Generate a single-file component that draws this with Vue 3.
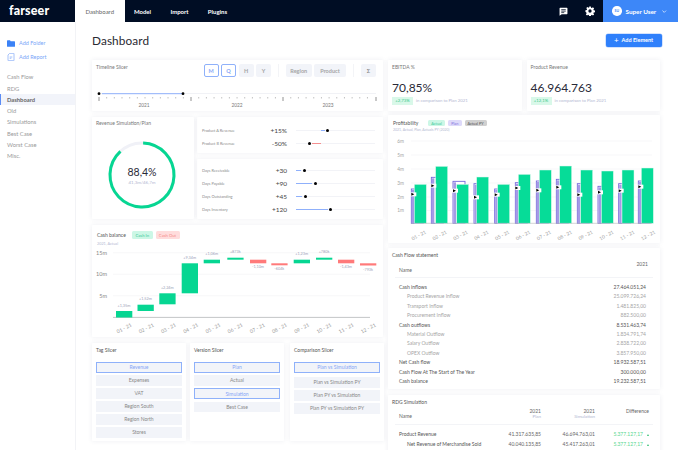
<script setup>
const nav = ['Cash Flow', 'RDG', 'Dashboard', 'Old', 'Simulations', 'Best Case', 'Worst Case', 'Misc.']
const months = ['01','02','03','04','05','06','07','08','09','10','11','12'].map(m => m + ' - 21')

const minorTicks = []
for (let i = 0; i < 36; i++) {
  if (i % 12) minorTicks.push(7 + i * 7.67)
}
const majorTicks = [7, 99, 191, 284]

const sliderTop = [
  { label: 'Product A Revenue', value: '+15%', thumb: 31, from: 25, to: 29, tone: 'blue' },
  { label: 'Product B Revenue', value: '-50%', thumb: 13.5, from: 16, to: 25, tone: 'red' }
]
const sliderDays = [
  { label: 'Days Receivable', value: '+30', thumb: 8, from: 0, to: 5, tone: 'blue' },
  { label: 'Days Payable', value: '+90', thumb: 19, from: 0, to: 16, tone: 'blue' },
  { label: 'Days Outstanding', value: '+45', thumb: 9.3, from: 0, to: 6, tone: 'blue' },
  { label: 'Days Inventory', value: '+120', thumb: 34.7, from: 0, to: 32, tone: 'blue' }
]

const cashBars = [
  [24, 86, 6.5, '+1,35m', 1], [45.5, 79.7, 6.3, '+1,52m', 1], [67.3, 68.3, 11, '+2,24m', 1],
  [89.7, 38.3, 30, '+9,34m', 1], [111.7, 34.7, 3.6, '+1,06m', 1], [135.3, 32.7, 2, '+873k', 1],
  [158, 34.7, 3.6, '-1,10m', 0], [179.3, 38.3, 2, '-604k', 0], [201.7, 34.7, 3.6, '+1,23m', 1],
  [224, 32.7, 2, '+780k', 1], [246, 34.7, 3.6, '-1,43m', 0], [268, 38.3, 2.2, '-793k', 0]
].map(([x, y, h, label, up]) => ({ x, y: y - 21, h, label, up: !!up }))

const cashGrid = [[6.7, '15m'], [28.3, '10m'], [49.7, '5m']]

const profitGrid = [[5, '6m'], [19, '5m'], [33, '4m'], [47, '3m'], [61, '2m'], [74.5, '1m']]
const greenX = [79, 143, 206, 266, 329, 391, 454, 515, 578, 640, 702, 760]
const greenTop = [208, 154, 208, 186, 208, 178, 165, 153, 165, 168, 165, 159]
const planX = [70, 130, 195, 258, 320, 382, 445, 505, 568, 630, 692, 751]
const planTop = [222, 187, 199, 206, 222, 203, 198, 193, 206, 214, 206, 198]
const markY = [238, 212, 227, 247, 239, 219, 226, 217, 239, 232, 227, 215]
const profitBars = greenX.map((g, i) => ({
  gx: g / 3,
  gy: greenTop[i] / 3 - 21,
  gh: (325 - greenTop[i]) / 3,
  px: planX[i] / 3,
  py: planTop[i] / 3 - 21,
  ph: (325 - planTop[i]) / 3,
  my: markY[i] / 3 - 21,
  month: months[i]
}))

const slicers = [
  { title: 'Tag Slicer', items: [['Revenue', 1], ['Expenses'], ['VAT'], ['Region South'], ['Region North'], ['Stores']] },
  { title: 'Version Slicer', items: [['Plan', 1], ['Actual'], ['Simulation', 1], ['Best Case']] },
  { title: 'Comparison Slicer', wide: true, items: [['Plan vs Simulation', 1], ['Plan vs Simulation PY'], ['Plan PY vs Simulation'], ['Plan PY vs Simulation PY']] }
]

const cashRows = [
  ['Cash inflows', '27.464.051,24', 0], ['Product Revenue Inflow', '25.099.726,24', 1], ['Transport Inflow', '1.481.825,00', 1],
  ['Procurement Inflow', '882.500,00', 1], ['Cash outflows', '8.531.463,74', 0], ['Material Outflow', '1.834.791,74', 1],
  ['Salary Outflow', '2.838.722,00', 1], ['OPEX Outflow', '3.857.950,00', 1], ['Net Cash flow', '18.932.587,51', 0],
  ['Cash Flow At The Start of The Year', '300.000,00', 0], ['Cash balance', '19.232.587,51', 0]
]
const rdgRows = [
  ['Product Revenue', '41.317.635,85', '46.694.763,01', '5.377.127,17', 0],
  ['Net Revenue of Merchandise Sold', '40.040.135,85', '45.417.263,01', '5.377.127,17', 1]
]
</script>

<template>
  <div class="app">
    <header class="top">
      <div class="logo">farseer</div>
      <nav class="tabs">
        <span class="tab on">Dashboard</span>
        <span class="tab">Model</span>
        <span class="tab">Import</span>
        <span class="tab">Plugins</span>
      </nav>
      <div class="top-right">
        <svg class="ic" viewBox="0 0 24 24" width="9" height="9"><path fill="#fff" d="M3 2h18a1.500 1.500 0 0 1 1.500 1.500v14a1.500 1.500 0 0 1-1.500 1.500H7l-5.500 4V3.500A1.500 1.500 0 0 1 3 2z"/><path stroke="#000d24" stroke-width="2" d="M6 7h12M6 11h12M6 15h8"/></svg>
        <svg class="ic gear" viewBox="0 0 24 24" width="10" height="10"><path fill="#fff" fill-rule="evenodd" d="M10 1h4l.6 3.100 1.900.8 2.600-1.800 2.800 2.800-1.800 2.600.8 1.900 3.100.6v4l-3.100.6-.8 1.900 1.800 2.600-2.800 2.800-2.600-1.800-1.900.8-.6 3.100h-4l-.6-3.100-1.900-.8-2.600 1.800-2.800-2.800 1.800-2.600-.8-1.900L1 14v-4l3.100-.6.800-1.900-1.800-2.600 2.800-2.800 2.600 1.800 1.900-.8zM12 8a4 4 0 1 0 0 8 4 4 0 0 0 0-8z"/></svg>
        <div class="user">
          <span class="avatar">SU</span>
          <span>Super User</span>
          <svg viewBox="0 0 10 6" width="4.500" height="3"><path d="M1 1l4 4 4-4" fill="none" stroke="#fff" stroke-width="1.500"/></svg>
        </div>
      </div>
    </header>

    <div class="body">
      <aside class="side">
        <div class="act">
          <svg viewBox="0 0 24 20" width="8" height="7"><path fill="#3b82f6" d="M0 2a2 2 0 0 1 2-2h7l2 3h11a2 2 0 0 1 2 2v13a2 2 0 0 1-2 2H2a2 2 0 0 1-2-2z"/></svg>
          <span>Add Folder</span>
        </div>
        <div class="act">
          <svg viewBox="0 0 20 24" width="7" height="8"><path fill="none" stroke="#7aa5f8" stroke-width="2" d="M6 1h12a1 1 0 0 1 1 1v20a1 1 0 0 1-1 1H2a1 1 0 0 1-1-1V6z"/><path stroke="#7aa5f8" stroke-width="2" d="M6 12h8M6 16h5"/></svg>
          <span>Add Report</span>
        </div>
        <ul class="menu">
          <li v-for="n in nav" :key="n" :class="{ cur: n === 'Dashboard' }">{{ n }}</li>
        </ul>
      </aside>

      <main class="main">
        <div class="head">
          <h1>Dashboard</h1>
          <button class="add"><span class="plus">+</span>Add Element</button>
        </div>

        <div class="cols">
          <div class="col left">
            <section class="card timeline">
              <div class="tl-head">
                <span class="t">Timeline Slicer</span>
                <div class="tl-btns">
                  <span class="tb act-b w15">M</span>
                  <span class="tb act-b w15">Q</span>
                  <span class="tb w15">H</span>
                  <span class="tb w15">Y</span>
                  <i class="sep"></i>
                  <span class="tb w25">Region</span>
                  <span class="tb w32">Product</span>
                  <i class="sep"></i>
                  <span class="tb w15 sig">Σ</span>
                </div>
              </div>
              <svg class="tl-svg" width="291" height="31" viewBox="0 0 291 31">
                <line x1="7" x2="284" y1="13.500" y2="13.500" stroke="#f1f2f6" stroke-width="1"/>
                <line x1="10" x2="90" y1="13.700" y2="13.700" stroke="#8fb0fb" stroke-width="1"/>
                <circle cx="7" cy="13.700" r="1.400" fill="#000"/>
                <circle cx="91" cy="13.700" r="1.400" fill="#000"/>
                <line v-for="x in majorTicks" :key="x" :x1="x" :x2="x" y1="17" y2="21" stroke="#777" stroke-width=".8"/>
                <line v-for="x in minorTicks" :key="'m' + x" :x1="x" :x2="x" y1="17" y2="18.500" stroke="#999" stroke-width=".6"/>
                <text class="yr" x="52" y="27" text-anchor="middle">2021</text>
                <text class="yr" x="145" y="27" text-anchor="middle">2022</text>
                <text class="yr" x="236" y="27" text-anchor="middle">2023</text>
              </svg>
            </section>

            <div class="sim-row">
              <section class="card rev">
                <span class="t">Revenue Simulation/Plan</span>
                <div class="donut">
                  <svg width="74" height="74" viewBox="0 0 74 74">
                    <circle cx="37" cy="37" r="32" fill="none" stroke="#f0f1f7" stroke-width="3"/>
                    <circle cx="37" cy="37" r="32" fill="none" stroke="#06d692" stroke-width="3" stroke-dasharray="176 201" transform="rotate(-88 37 37)"/>
                  </svg>
                  <div class="d-txt">
                    <b>88,4%</b>
                    <small>41,3m/46,7m</small>
                  </div>
                </div>
              </section>
              <div class="slid-col">
                <section class="card sl sl-a">
                  <div v-for="r in sliderTop" :key="r.label" class="sl-row">
                    <span class="sl-l">{{ r.label }}</span>
                    <span class="sl-v">{{ r.value }}</span>
                    <span class="track">
                      <i class="seg" :class="r.tone" :style="{ left: r.from + 'px', width: (r.to - r.from) + 'px' }"></i>
                      <i class="thumb" :style="{ left: r.thumb + 'px' }"></i>
                    </span>
                  </div>
                </section>
                <section class="card sl sl-b">
                  <div v-for="r in sliderDays" :key="r.label" class="sl-row">
                    <span class="sl-l">{{ r.label }}</span>
                    <span class="sl-v">{{ r.value }}</span>
                    <span class="track">
                      <i class="seg" :class="r.tone" :style="{ left: r.from + 'px', width: (r.to - r.from) + 'px' }"></i>
                      <i class="thumb" :style="{ left: r.thumb + 'px' }"></i>
                    </span>
                  </div>
                </section>
              </div>
            </div>

            <section class="card cash">
              <div class="ch-head">
                <span class="t dk">Cash balance</span>
                <span class="chip c-in">Cash In</span>
                <span class="chip c-out">Cash Out</span>
              </div>
              <div class="sub">2021, Actual</div>
              <svg class="ch-svg" width="291" height="91" viewBox="0 0 291 91">
                <g v-for="g in cashGrid" :key="g[1]">
                  <line x1="21" x2="278" :y1="g[0]" :y2="g[0]" stroke="#f3f4f7" stroke-width=".7"/>
                  <text class="ax" x="15" :y="g[0] + 2" text-anchor="end">{{ g[1] }}</text>
                </g>
                <line x1="21" x2="278" y1="71.400" y2="71.400" stroke="#b5b7b9" stroke-width=".8"/>
                <g v-for="(b, i) in cashBars" :key="i">
                  <rect :x="b.x" :y="b.y" width="16.300" :height="b.h" :fill="b.up ? '#06d692' : '#ff7a7a'"/>
                  <text class="bl" :x="b.x + 8" :y="b.up ? b.y - 4.500 : b.y + b.h + 5" text-anchor="middle">{{ b.label }}</text>
                </g>
                <text v-for="(m, i) in months" :key="m" class="xl" :x="32 + i * 22.200" y="84" text-anchor="middle" :transform="`rotate(-28 ${32 + i * 22.200} 82)`">{{ m }}</text>
              </svg>
            </section>

            <div class="slicers">
              <section v-for="s in slicers" :key="s.title" class="card slicer" :class="{ wide: s.wide }">
                <span class="t dk">{{ s.title }}</span>
                <div class="opts">
                  <span v-for="it in s.items" :key="it[0]" class="opt" :class="{ sel: it[1] }">{{ it[0] }}</span>
                </div>
              </section>
            </div>
          </div>

          <div class="col right">
            <div class="kpis">
              <section class="card kpi">
                <span class="t">EBITDA %</span>
                <div class="big">70,85%</div>
                <div class="cmp"><span class="up">+2,73%</span><span>in comparison to Plan 2021</span></div>
              </section>
              <section class="card kpi">
                <span class="t">Product Revenue</span>
                <div class="big">46.964.763</div>
                <div class="cmp"><span class="up">+12,1%</span><span>in comparison to Plan 2021</span></div>
              </section>
            </div>

            <section class="card profit">
              <div class="ch-head pf">
                <span class="t dk">Profitability</span>
                <span class="chip p-a">Actual</span>
                <span class="chip p-p">Plan</span>
                <span class="chip p-y">Actual PY</span>
              </div>
              <div class="sub pf-sub">2021, Actual, Plan, Actuals PY (2020)</div>
              <svg class="pf-svg" width="272" height="107" viewBox="0 0 272 107">
                <g v-for="g in profitGrid" :key="g[1]">
                  <line x1="23" x2="264" :y1="g[0]" :y2="g[0]" stroke="#f3f4f7" stroke-width=".7"/>
                  <text class="ax sm" x="16" :y="g[0] + 1.800" text-anchor="end">{{ g[1] }}</text>
                </g>
                <g v-for="(b, i) in profitBars" :key="i">
                  <rect :x="b.px" :y="b.py" width="12" :height="b.ph" fill="#fff" stroke="#7566dc" stroke-width=".9"/>
                  <rect :x="b.px + .5" :y="b.py + 1" width="2.500" :height="b.ph - 1" fill="#a59ae6"/>
                  <rect :x="b.gx" :y="b.gy" width="12" :height="b.gh" fill="#06dc98" stroke="#dff8ee" stroke-width=".5"/>
                  <rect :x="b.px - 1" :y="b.my - 2" width="6" height="4" fill="#fff"/>
                  <path :d="`M${b.px} ${b.my - 1.500}L${b.px + 3} ${b.my}L${b.px} ${b.my + 1.500}z`" fill="#000"/>
                </g>
                <line x1="23" x2="264" y1="87.300" y2="87.300" stroke="#b5b7b9" stroke-width=".6"/>
                <text v-for="(m, i) in months" :key="m" class="xl sm" :x="30.700 + i * 20.850" y="101" text-anchor="middle" :transform="`rotate(-28 ${30.700 + i * 20.850} 99)`">{{ m }}</text>
              </svg>
            </section>

            <section class="card tbl cf">
              <span class="t dk">Cash Flow statement</span>
              <div class="cf-head">
                <span class="n">Name</span>
                <span class="y">2021</span>
              </div>
              <div class="cf-rows">
                <div v-for="r in cashRows" :key="r[0]" class="cf-row" :class="{ ind: r[2] }">
                  <span>{{ r[0] }}</span><span>{{ r[1] }}</span>
                </div>
              </div>
            </section>

            <section class="card tbl rdg">
              <span class="t dk">RDG Simulation</span>
              <div class="rd-head">
                <span class="n">Name</span>
                <span class="hc"><em>2021</em><small>Plan</small></span>
                <span class="hc"><em>2021</em><small>Simulation</small></span>
                <span class="hd">Difference</span>
              </div>
              <div class="rd-rows">
                <div v-for="r in rdgRows" :key="r[0]" class="rd-row" :class="{ ind: r[4] }">
                  <span>{{ r[0] }}</span><span class="num">{{ r[1] }}</span><span class="num">{{ r[2] }}</span>
                  <span class="diff">{{ r[3] }}<i class="tri"></i></span>
                </div>
              </div>
            </section>
          </div>
        </div>
      </main>
    </div>
  </div>
</template>

<style>
html, body { margin: 0; background: #fff; overflow: hidden; }
</style>

<style scoped>
* { box-sizing: border-box; }
.app { width: 678px; height: 450px; overflow: hidden; font-family: Lato, "Liberation Sans", sans-serif; color: #333; background: #fff; }
.top { height: 22px; background: #000d24; display: flex; align-items: stretch; color: #fff; }
.logo { width: 75px; padding-left: 9px; font: 900 12.500px/21px Lato, sans-serif; letter-spacing: .15px; }
.tabs { display: flex; font-size: 6px; font-weight: 700; }
.tab { width: 36px; display: flex; align-items: center; justify-content: center; }
.tab.on { width: 49.500px; background: #fff; color: #666; font-weight: 400; }
.tab:nth-child(3) { margin-left: 1px; }
.tab:nth-child(4) { margin-left: 2px; }
.top-right { margin-left: auto; display: flex; align-items: center; }
.ic { margin-right: 17px; }
.gear { margin-right: 8px; }
.user { width: 75px; height: 22px; background: #3d87f8; display: flex; align-items: center; padding-left: 9px; gap: 4px; font-size: 6.300px; font-weight: 700; }
.avatar { width: 9.500px; height: 9.500px; border-radius: 50%; background: #fff; color: #3d87f8; font-size: 3.500px; display: flex; align-items: center; justify-content: center; }
.user svg { margin-left: 2px; }

.body { display: flex; height: 428px; }
.side { width: 76px; flex: none; border-right: 1px solid #f2f3f6; padding-top: 14.250px; }
.act { display: flex; align-items: center; gap: 4px; padding-left: 7px; height: 13.500px; font-size: 5.500px; color: #7ba6f8; }
.act svg { width: 8px; }
.menu { list-style: none; margin: 8px 0 0; padding: 0; font-size: 5.800px; color: #9a9a9a; }
.menu li { height: 11.300px; line-height: 11.300px; padding-left: 7px; }
.menu li.cur { background: #f2f4fa; color: #666; font-weight: 700; border-left: 1px solid #5b8cf5; padding-left: 6px; width: 75px; }

.main { flex: 1; padding: 11px 0 0 16px; }
.head { display: flex; justify-content: space-between; align-items: center; height: 14px; width: 569.500px; margin-bottom: 13px; }
h1 { margin: 0; font-size: 11.800px; font-weight: 400; color: #2a2a32; letter-spacing: .1px; }
.add { width: 56px; height: 13px; border: 0; border-radius: 2px; background: #2f80fb; color: #fff; box-shadow: 0 0 0 .5px #a9c8fb; font: 700 5.500px Lato, sans-serif; padding: 0; display: flex; align-items: center; justify-content: center; gap: 3px; }
.plus { font-size: 8px; font-weight: 400; line-height: 8px; }

.cols { display: flex; gap: 4px; }
.col { display: flex; flex-direction: column; }
.left { width: 292px; gap: 6px; }
.right { width: 272px; }
.card { background: #fff; box-shadow: 0 0 5px rgba(60, 70, 110, .09); border-radius: 1px; }
.t { font-size: 5px; color: #777; line-height: 7px; display: block; }
.t.dk { color: #555; }

.timeline { width: 291px; height: 51px; }
.tl-head { height: 20px; display: flex; justify-content: space-between; padding: 4px 7px 0 4px; }
.tl-btns { display: flex; align-items: flex-start; gap: 2.500px; }
.tb { height: 13px; border-radius: 2px; background: #f2f4f9; color: #a5a5a5; font-size: 5.500px; display: flex; align-items: center; justify-content: center; font-weight: 700; }
.w15 { width: 15px; }
.w25 { width: 25.500px; }
.w32 { width: 32px; }
.act-b { background: #fff; border: 1px solid #8fb1fa; color: #86a6f5; }
.sig { color: #888; }
.sep { width: 1px; height: 13px; background: #f3f4f7; margin: 0 4.500px; }
.tl-svg { display: block; }
.yr { font-size: 4.800px; fill: #777; font-family: Lato, sans-serif; }

.sim-row { display: flex; gap: 3px; height: 102px; }
.rev { width: 102px; padding: 3px 4px; position: relative; }
.donut { position: relative; width: 74px; height: 74px; margin: 11px 0 0 9px; }
.donut svg { display: block; }
.d-txt { position: absolute; inset: 0; display: flex; flex-direction: column; align-items: center; justify-content: center; padding-top: 1px; }
.d-txt b { font-size: 10.500px; font-weight: 400; color: #2a2a38; line-height: 13px; }
.d-txt small { font-size: 4.500px; color: #b3b8d2; line-height: 7px; }
.slid-col { width: 186px; display: flex; flex-direction: column; gap: 6px; }
.sl { padding-left: 5px; }
.sl-a { height: 36px; padding-top: 6.500px; }
.sl-b { height: 60px; padding-top: 4.500px; }
.sl-row { display: grid; grid-template-columns: 50px 35px 79px; height: 13px; align-items: center; }
.sl-l { font-size: 3.900px; color: #8a8a8a; white-space: nowrap; }
.sl-v { font-size: 6.500px; color: #444; text-align: right; }
.track { position: relative; height: 1px; background: #f2f3f7; margin-left: 9px; width: 79px; }
.seg { position: absolute; top: 0; height: 1px; }
.seg.blue { background: #8fb0fb; }
.seg.red { background: #f58f8f; }
.thumb { position: absolute; top: -1px; width: 3px; height: 3px; margin-left: -1.500px; border-radius: 50%; background: #000; }

.cash { width: 291px; height: 112px; }
.ch-head { display: flex; align-items: center; height: 16px; padding: 4px 0 0 5px; }
.ch-head .t { width: 35px; }
.chip { height: 8px; border-radius: 1.500px; font-size: 4.200px; display: flex; align-items: center; justify-content: center; }
.c-in { width: 20.500px; background: #ccf7e6; color: #3cc99a; }
.c-out { width: 24px; background: #ffdcdc; color: #f58a8a; margin-left: 3px; }
.sub { font-size: 3.800px; color: #b3b8d2; line-height: 5px; padding-left: 5px; }
.ch-svg { display: block; }
.ax { font-size: 5.500px; fill: #888; font-family: Lato, sans-serif; }
.ax.sm { font-size: 4.800px; fill: #a5a5a5; }
.bl { font-size: 3.800px; fill: #9ca2b8; font-family: Lato, sans-serif; }
.xl { font-size: 5px; fill: #999; font-family: Lato, sans-serif; }
.xl.sm { font-size: 4.800px; }

.slicers { display: flex; gap: 4px; height: 98px; }
.slicer { width: 94px; padding: 3.500px 4px; }
.slicer.wide { margin-left: 2px; }
.opts { display: flex; flex-direction: column; gap: 2.500px; margin-top: 8px; }
.opt { height: 10.500px; background: #f2f4f9; color: #888; font-size: 5px; display: flex; align-items: center; justify-content: center; }
.opt.sel { border: 1px solid #8fb1fa; color: #86a6f5; height: 11px; }
.wide .opt.sel { margin-bottom: 2px; }

.kpis { display: flex; gap: 5px; height: 51px; margin-bottom: 4px; }
.kpi { width: 134px; padding: 4px 4px 0; }
.big { font-size: 12px; color: #2a2a38; line-height: 16px; margin-top: 9px; }
.cmp { display: flex; align-items: center; gap: 3px; font-size: 4.300px; color: #b3b8d2; margin-top: 1px; }
.up { background: #d9f8e9; color: #38c98a; width: 21px; height: 7.500px; display: flex; align-items: center; justify-content: center; }

.profit { height: 128px; width: 272px; margin-bottom: 5px; }
.pf { padding-top: 3px; height: 13px; }
.p-a { width: 17px; height: 5.500px; background: #ccf7e6; color: #3cc99a; font-size: 3.800px; }
.p-p { width: 13.500px; height: 5.500px; background: #dedafa; color: #7f74dd; font-size: 3.800px; margin-left: 3px; }
.p-y { width: 22px; height: 5.500px; background: #d0d0d0; color: #555; font-size: 3.800px; margin-left: 3px; }
.pf-sub { height: 8px; line-height: 5px; font-size: 3.500px; }
.pf-svg { display: block; }

.tbl { width: 272px; padding: 4px 4px 0; }
.cf { height: 141px; margin-bottom: 6px; }
.cf-head { position: relative; height: 19px; margin: 0 3px; border-bottom: 1px solid #f3f4f7; font-size: 5px; color: #666; }
.cf-head .n { position: absolute; left: 4px; top: 8px; }
.cf-head .y { position: absolute; right: 5px; top: 2px; }
.cf-rows { padding: 5px 0 0 7px; margin-right: 10px; }
.cf-row { display: flex; justify-content: space-between; height: 9.400px; line-height: 9.400px; font-size: 5px; color: #555; }
.cf-row.ind { color: #a5a5a5; padding-left: 8px; }
.rdg { height: 60px; }
.rd-head { display: grid; grid-template-columns: 90px 52px 54px 54px; height: 17px; margin: 2px 3px 0; padding-left: 4px; border-bottom: 1px solid #f3f4f7; font-size: 5px; color: #666; }
.n { align-self: center; }
.hc { display: flex; flex-direction: column; text-align: right; line-height: 6px; }
.hc em { font-style: normal; }
.hc small { font-size: 4.500px; color: #b3b8d2; }
.hd { text-align: right; }
.rd-rows { padding: 5px 0 0 7px; }
.rd-row { display: grid; grid-template-columns: 90px 52px 54px 54px; height: 9.600px; line-height: 9.600px; font-size: 5px; color: #555; }
.rd-row.ind span:first-child { padding-left: 8px; white-space: nowrap; }
.num { text-align: right; color: #666; }
.diff { text-align: right; color: #55d68e; }
.tri { display: inline-block; width: 0; height: 0; border-left: 1.500px solid transparent; border-right: 1.500px solid transparent; border-bottom: 2.500px solid #30c070; margin-left: 4px; }
</style>
